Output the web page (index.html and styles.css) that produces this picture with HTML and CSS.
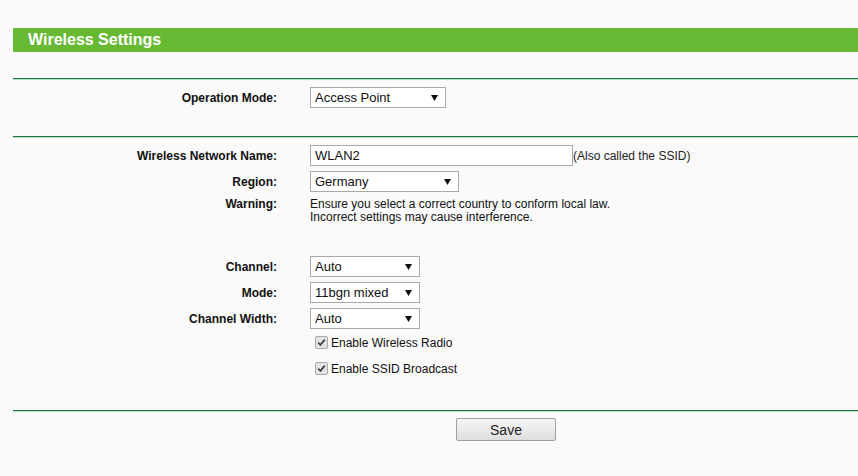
FILE: index.html
```html
<!DOCTYPE html>
<html>
<head>
<meta charset="utf-8">
<link rel="stylesheet" href="styles.css">
</head>
<body>
<div class="page">
  <div class="title-bar">Wireless Settings</div>
  <div class="rule rule-first"></div>
  <div class="form form-top">
    <label class="lbl">Operation Mode:</label>
    <div class="ctl"><select class="sel w136"><option>Access Point</option></select></div>
  </div>
  <div class="rule"></div>
  <div class="form form-main">
    <label class="lbl">Wireless Network Name:</label>
    <div class="ctl"><input class="txt" type="text" value="WLAN2"><span class="hint">(Also called the SSID)</span></div>
    <label class="lbl">Region:</label>
    <div class="ctl"><select class="sel w149"><option>Germany</option></select></div>
    <label class="lbl lbl-top">Warning:</label>
    <div class="ctl note">Ensure you select a correct country to conform local law.<br>Incorrect settings may cause interference.</div>
    <label class="lbl gap-top">Channel:</label>
    <div class="ctl gap-top"><select class="sel w110"><option>Auto</option></select></div>
    <label class="lbl">Mode:</label>
    <div class="ctl"><select class="sel w110"><option>11bgn mixed</option></select></div>
    <label class="lbl">Channel Width:</label>
    <div class="ctl"><select class="sel w110"><option>Auto</option></select></div>
    <div class="chk-first"></div>
    <div class="ctl chk-row chk-first"><input class="chk" type="checkbox" checked><span>Enable Wireless Radio</span></div>
    <div></div>
    <div class="ctl chk-row"><input class="chk" type="checkbox" checked><span>Enable SSID Broadcast</span></div>
  </div>
  <div class="rule"></div>
  <div class="actions"><button class="btn">Save</button></div>
</div>
</body>
</html>
```
FILE: styles.css
```css
html, body {
  margin: 0;
  padding: 0;
  background: #fafafa;
}
body {
  font-family: Arial, "Liberation Sans", sans-serif;
  color: #000;
}
.page {
  padding: 28px 0 0 13px;
}
.title-bar {
  height: 24px;
  line-height: 24px;
  background: #67b934;
  color: #fff;
  font-weight: bold;
  font-size: 16px;
  padding-left: 15px;
}
.rule {
  height: 1px;
  background: #18773a;
  border-bottom: 1px solid #bcdcc4;
}
.rule-first {
  margin-top: 26px;
}
.form {
  display: grid;
  grid-template-columns: 264px 1fr;
  column-gap: 33px;
  row-gap: 5px;
  align-items: center;
}
.form-top {
  padding: 7px 0 28px;
}
.form-main {
  padding: 7px 0 31px;
}
.lbl {
  font-weight: bold;
  font-size: 12px;
  text-align: right;
  color: #111;
}
.lbl-top {
  align-self: start;
  line-height: 13px;
  padding-top: 1px;
}
.gap-top {
  margin-top: 27px;
}
.ctl {
  display: flex;
  align-items: center;
  font-size: 12px;
}
.sel {
  appearance: none;
  -webkit-appearance: none;
  height: 21px;
  box-sizing: border-box;
  border: 1px solid #a9a9a9;
  border-radius: 0;
  background: #fff url("data:image/svg+xml;utf8,<svg xmlns='http://www.w3.org/2000/svg' width='7' height='6'><path d='M0 0H7L3.5 6Z' fill='%23111'/></svg>") no-repeat right 7px center;
  font-family: Arial, "Liberation Sans", sans-serif;
  font-size: 13px;
  color: #111;
  padding: 0 0 0 4px;
  margin: 0;
}
.w136 { width: 136px; }
.w149 { width: 149px; }
.w110 { width: 110px; }
.txt {
  width: 263px;
  height: 21px;
  box-sizing: border-box;
  border: 1px solid #a9a9a9;
  background: #fff;
  font-family: Arial, "Liberation Sans", sans-serif;
  font-size: 13px;
  color: #111;
  padding: 0 4px;
  margin: 0;
  outline: none;
}
.hint {
  font-size: 12px;
  color: #222;
}
.note {
  display: block;
  line-height: 13px;
  color: #111;
  padding-top: 1px;
}
.chk-row {
  height: 21px;
  padding-left: 4px;
  gap: 2px;
  color: #111;
}
.chk-first {
  margin-top: -2px;
}
.chk {
  appearance: none;
  -webkit-appearance: none;
  width: 13px;
  height: 13px;
  box-sizing: border-box;
  margin: 0 1px 0 1px;
  border: 1px solid #a8a8a8;
  border-radius: 2px;
  background: #e4e4e4 url("data:image/svg+xml;utf8,<svg xmlns='http://www.w3.org/2000/svg' width='11' height='11'><path d='M2.2 5.6L4.4 7.8L8.8 2.6' stroke='%23444' stroke-width='1.8' fill='none'/></svg>") no-repeat center;
}
.actions {
  display: flex;
  padding: 6px 0 0 443px;
}
.btn {
  width: 100px;
  height: 23px;
  border: 1px solid #a0a0a0;
  border-radius: 2px;
  background: linear-gradient(#f6f6f6, #dedede);
  font-family: Arial, "Liberation Sans", sans-serif;
  font-size: 14px;
  color: #222;
  padding: 0;
}
```
